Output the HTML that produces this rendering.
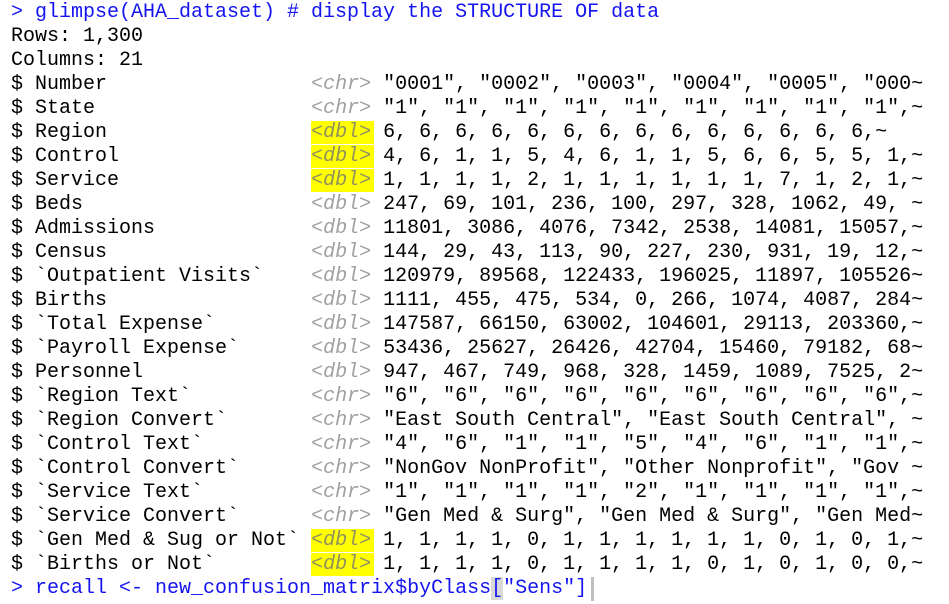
<!DOCTYPE html>
<html><head><meta charset="utf-8"><style>
html,body{margin:0;padding:0;background:#fff;width:949px;height:604px;overflow:hidden}
pre{margin:0;position:absolute;left:11px;top:1px;font-family:"Liberation Mono",monospace;font-size:20px;line-height:24px;color:#000;white-space:pre}
.b{color:#1414f0}
.t{color:#a0a0a0;font-style:italic}
.h{background:#ffff00;color:#909060;font-style:italic;padding-right:3px;margin-right:-3px}
.br{background:#d8d8d8}
.cur{display:inline-block;width:3px;height:24px;background:#c0c0c0;vertical-align:top;margin-left:4px}
</style></head><body>
<pre><span class="b">&gt; glimpse(AHA_dataset) # display the STRUCTURE OF data</span>
Rows: 1,300
Columns: 21
$ Number                 <span class="t">&lt;chr&gt;</span> "0001", "0002", "0003", "0004", "0005", "000~
$ State                  <span class="t">&lt;chr&gt;</span> "1", "1", "1", "1", "1", "1", "1", "1", "1",~
$ Region                 <span class="h">&lt;dbl&gt;</span> 6, 6, 6, 6, 6, 6, 6, 6, 6, 6, 6, 6, 6, 6,~
$ Control                <span class="h">&lt;dbl&gt;</span> 4, 6, 1, 1, 5, 4, 6, 1, 1, 5, 6, 6, 5, 5, 1,~
$ Service                <span class="h">&lt;dbl&gt;</span> 1, 1, 1, 1, 2, 1, 1, 1, 1, 1, 1, 7, 1, 2, 1,~
$ Beds                   <span class="t">&lt;dbl&gt;</span> 247, 69, 101, 236, 100, 297, 328, 1062, 49, ~
$ Admissions             <span class="t">&lt;dbl&gt;</span> 11801, 3086, 4076, 7342, 2538, 14081, 15057,~
$ Census                 <span class="t">&lt;dbl&gt;</span> 144, 29, 43, 113, 90, 227, 230, 931, 19, 12,~
$ `Outpatient Visits`    <span class="t">&lt;dbl&gt;</span> 120979, 89568, 122433, 196025, 11897, 105526~
$ Births                 <span class="t">&lt;dbl&gt;</span> 1111, 455, 475, 534, 0, 266, 1074, 4087, 284~
$ `Total Expense`        <span class="t">&lt;dbl&gt;</span> 147587, 66150, 63002, 104601, 29113, 203360,~
$ `Payroll Expense`      <span class="t">&lt;dbl&gt;</span> 53436, 25627, 26426, 42704, 15460, 79182, 68~
$ Personnel              <span class="t">&lt;dbl&gt;</span> 947, 467, 749, 968, 328, 1459, 1089, 7525, 2~
$ `Region Text`          <span class="t">&lt;chr&gt;</span> "6", "6", "6", "6", "6", "6", "6", "6", "6",~
$ `Region Convert`       <span class="t">&lt;chr&gt;</span> "East South Central", "East South Central", ~
$ `Control Text`         <span class="t">&lt;chr&gt;</span> "4", "6", "1", "1", "5", "4", "6", "1", "1",~
$ `Control Convert`      <span class="t">&lt;chr&gt;</span> "NonGov NonProfit", "Other Nonprofit", "Gov ~
$ `Service Text`         <span class="t">&lt;chr&gt;</span> "1", "1", "1", "1", "2", "1", "1", "1", "1",~
$ `Service Convert`      <span class="t">&lt;chr&gt;</span> "Gen Med &amp; Surg", "Gen Med &amp; Surg", "Gen Med~
$ `Gen Med &amp; Sug or Not` <span class="h">&lt;dbl&gt;</span> 1, 1, 1, 1, 0, 1, 1, 1, 1, 1, 1, 0, 1, 0, 1,~
$ `Births or Not`        <span class="h">&lt;dbl&gt;</span> 1, 1, 1, 1, 0, 1, 1, 1, 1, 0, 1, 0, 1, 0, 0,~
<span class="b">&gt; recall &lt;- new_confusion_matrix$byClass<span class="br">[</span>"Sens"]</span><span class="cur"></span></pre>
</body></html>
